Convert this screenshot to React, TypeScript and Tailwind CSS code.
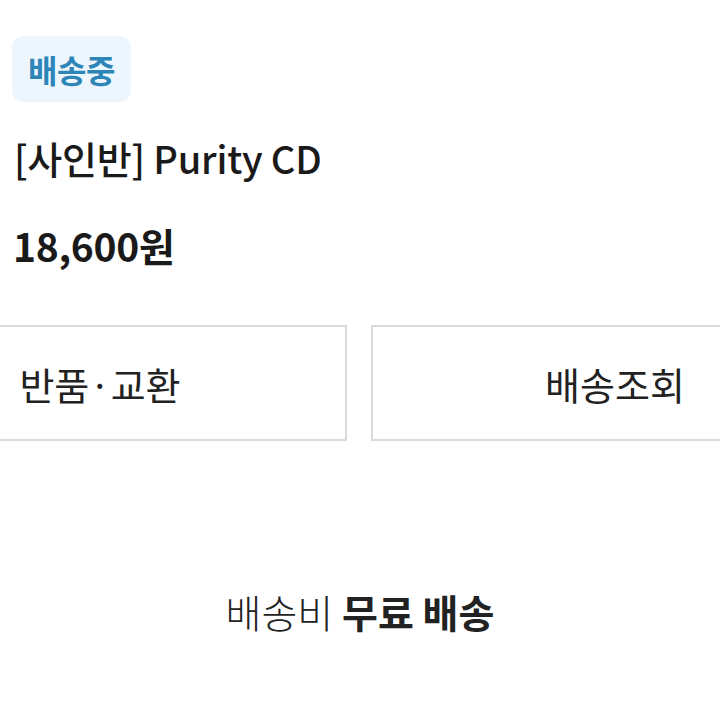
import React from 'react';

const App = () => {
  return (
    <div className="w-[720px] h-[720px] overflow-hidden bg-white text-[#1a1a1a] font-['Noto_Sans_CJK_KR',sans-serif]">
      {/* status badge */}
      <div className="pt-[36px] pl-[12px]">
        <span className="inline-flex items-center justify-center w-[119px] h-[66px] rounded-[12px] bg-[#eef6fd] text-[#2e86b8] text-[32px] leading-[40px] font-bold tracking-[-0.5px]">
          배송중
        </span>
      </div>

      {/* product info */}
      <h1 className="mt-[32px] ml-[14px] text-[38px] font-medium leading-[48px] tracking-[-0.2px]">
        [사인반] Purity CD
      </h1>
      <p className="mt-[39px] ml-[13px] text-[39px] font-bold leading-[48px] tracking-[-0.3px]">
        18,600원
      </p>

      {/* actions */}
      <div className="mt-[56px] ml-[-147px] flex gap-[24px]">
        <button className="w-[494px] h-[116px] shrink-0 border-2 border-[#d9d9d9] bg-white text-[38px] font-normal text-[#222]">
          반품·교환
        </button>
        <button className="w-[488px] h-[116px] shrink-0 border-2 border-[#d9d9d9] bg-white text-[38px] font-normal text-[#222]">
          배송조회
        </button>
      </div>

      {/* shipping fee */}
      <p className="mt-[146px] text-center text-[39px] leading-[48px] text-[#222]">
        <span className="font-light">배송비</span> <span className="font-bold">무료 배송</span>
      </p>
    </div>
  );
};

export default App;
